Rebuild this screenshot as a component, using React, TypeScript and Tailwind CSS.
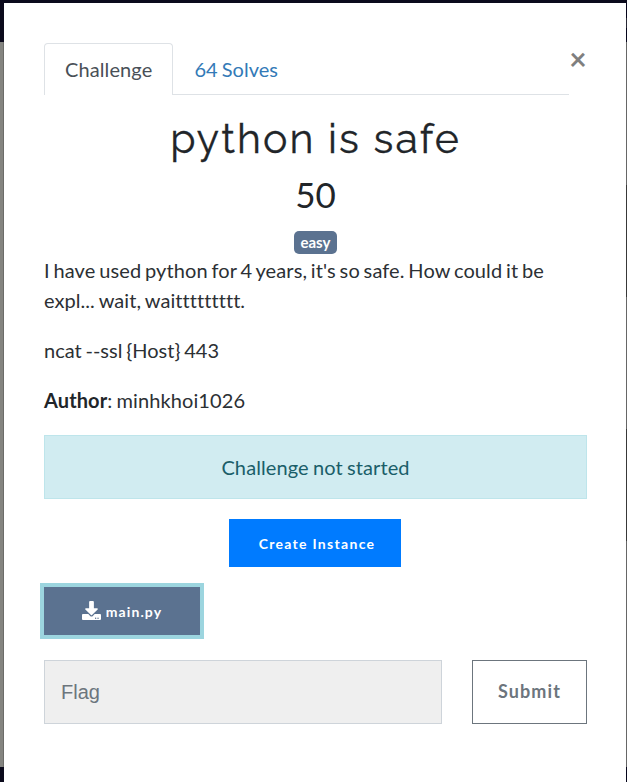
import { FaDownload } from "react-icons/fa";

function LeftEdge() {
  return (
    <div className="flex w-1 shrink-0 flex-col bg-[#0b0a1c]">
      <div className="h-[39px]" />
      <div className="h-[725px] border-r border-[#6c6c69] bg-[#848480]" />
    </div>
  );
}

function RightEdge() {
  return (
    <div className="flex w-px shrink-0 flex-col bg-[#05041a]">
      <div className="h-[15px]" />
      <div className="h-[10px] bg-[#282834]" />
      <div className="h-[14px]" />
      <div className="h-[143px] bg-[#666666]" />
      <div className="h-[112px] bg-[#383838]" />
      <div className="h-[132px] bg-[#666666]" />
      <div className="h-[112px] bg-[#383838]" />
      <div className="h-[226px] bg-[#666666]" />
    </div>
  );
}

function Tabs() {
  return (
    <div className="flex h-[52px] w-[543px] items-start">
      <div className="flex h-[52px] w-[525px] shrink-0">
        <div className="h-[52px] w-[129px] rounded-t border border-b-0 border-[#dee2e6] pt-[10px] pl-5 tracking-[0.1px] text-[#495057]">
          Challenge
        </div>
        <div className="flex-1 border-b border-[#dee2e6] pt-[11px] pl-[21.5px] [word-spacing:-1px] text-[#337ab7]">
          64 Solves
        </div>
      </div>
      <button
        aria-label="Close"
        className="h-[30px] w-[18px] text-center text-[30px] leading-[30px] font-bold text-[#7f7f7f]"
      >
        ×
      </button>
    </div>
  );
}

export default function App() {
  return (
    <div className="flex h-[782px] w-[627px] flex-col overflow-hidden bg-[#0b0a1c] pt-[3px] font-['Lato',sans-serif] text-[20px] leading-[30px] text-[#212529]">
      <div className="flex flex-1">
        <LeftEdge />
        <main className="w-[622px] bg-white px-10 pt-10">
          <Tabs />
          <div className="w-[543px]">
            <h2 className="mt-5 text-center font-['Raleway','Lato',sans-serif] text-[41px] leading-[48px] tracking-[2.1px] [-webkit-text-stroke:0.3px_#212529]">
              python is safe
            </h2>
            <h3 className="mt-[7px] text-center text-[35px] leading-[48px]">50</h3>
            <div className="mt-[13px] flex h-6 justify-center">
              <span className="h-[23px] w-[43px] rounded-[5px] bg-[#5b7290] text-center text-[15px] leading-[23px] font-bold text-white">
                easy
              </span>
            </div>
            <p className="text-[#2c3034]">
              <span className="tracking-[0.12px] [word-spacing:-1.5px]">
                I have used python for 4 years, it's so safe. How could it be
              </span>
              <br />
              <span className="tracking-[0.06px] [word-spacing:-1px]">expl... wait, waittttttttt.</span>
            </p>
            <p className="mt-5 [word-spacing:-1.3px] text-[#2c3034]">ncat --ssl &#123;Host&#125; 443</p>
            <p className="mt-5 tracking-[0.1px] [word-spacing:-1px] text-[#2c3034]">
              <strong className="font-bold text-[#212529]">Author</strong>: minhkhoi1026
            </p>
            <div className="mt-5 h-16 border border-[#bee5eb] bg-[#d1ecf1] pt-4 text-center tracking-[0.1px] [word-spacing:-1px] text-[#1a5e69]">
              Challenge not started
            </div>
            <div className="mt-5 flex justify-center pr-px">
              <button className="h-12 w-[172px] bg-[#007bff] pt-0.5 pl-1 text-[14px] font-bold tracking-[1.3px] text-white">
                Create Instance
              </button>
            </div>
            <button className="mt-5 flex h-12 w-[156px] items-center justify-center gap-[5px] bg-[#5b7290] text-[14px] font-bold tracking-[1.1px] text-white ring-4 ring-[#9cd5df]">
              <FaDownload size={19} className="-mt-0.5" />
              <span className="pt-0.5">main.py</span>
            </button>
            <div className="mt-[25px] flex justify-between">
              <input
                placeholder="Flag"
                className="h-16 w-[398px] border border-[#ced4da] bg-[#efefef] px-4 font-['Liberation_Sans',sans-serif] text-[20px] placeholder:text-[#6c757d]"
              />
              <button className="h-16 w-[115px] border border-[#6c757d] pb-0.5 text-[18px] font-bold tracking-[1.1px] text-[#6c757d]">
                Submit
              </button>
            </div>
          </div>
        </main>
        <RightEdge />
      </div>
    </div>
  );
}
